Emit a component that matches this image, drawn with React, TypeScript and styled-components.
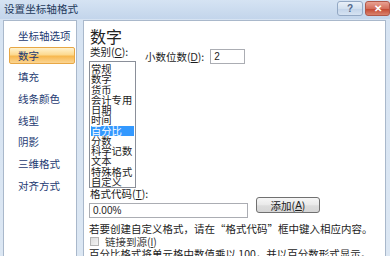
import React from "react";
import styled, { createGlobalStyle } from "styled-components";

const GlobalStyle = createGlobalStyle`
  html, body { margin: 0; padding: 0; }
  body {
    width: 390px;
    height: 256px;
    overflow: hidden;
    font-family: "Noto Sans CJK SC", "Liberation Sans", sans-serif;
    background: #d3e0ef;
  }
`;

const CJK = `"Noto Sans CJK SC", "Liberation Sans", sans-serif`;

const Window = styled.div`
  width: 390px;
  height: 256px;
  overflow: hidden;
  display: flex;
  flex-direction: column;
  background: linear-gradient(#d6e3f2, #dce7f3);
`;

const TitleBar = styled.div`
  height: 19px;
  flex: none;
  display: flex;
  align-items: flex-start;
  justify-content: space-between;
  background: linear-gradient(#d5e3f3, #c3d5eb);
`;

const Title = styled.div`
  font-family: ${CJK};
  font-size: 10.6px;
  line-height: 18px;
  padding-left: 4px;
  color: #1e395b;
`;

const TitleButtons = styled.div`
  display: flex;
  gap: 2px;
  padding-top: 1px;
`;

const CapButton = styled.div<{ $close?: boolean }>`
  width: ${(p) => (p.$close ? 25 : 26)}px;
  height: 15px;
  box-sizing: border-box;
  border: 1px solid ${(p) => (p.$close ? "#b0584a" : "#93a8c4")};
  border-radius: 3px;
  display: flex;
  align-items: center;
  justify-content: center;
  font-family: "Liberation Sans", sans-serif;
  font-weight: bold;
  font-size: 10px;
  color: ${(p) => (p.$close ? "#ffffff" : "#52688a")};
  background: ${(p) =>
    p.$close
      ? "linear-gradient(#e8a192, #d4705d 50%, #c44a33 55%, #d9826d)"
      : "linear-gradient(#e9f0f8, #d3e0ef 50%, #c3d4ea 55%, #d6e3f2)"};
`;

const Body = styled.div`
  flex: 1;
  display: flex;
  gap: 6px;
  padding: 1px 4px 0 3px;
  min-height: 0;
`;

const NavPanel = styled.div`
  width: 74px;
  height: 250px;
  flex: none;
  box-sizing: border-box;
  background: #ffffff;
  border: 1px solid #a9b8cb;
  padding: 6px 1px 0 5px;
  display: flex;
  flex-direction: column;
  gap: 4.7px;
`;

const NavItem = styled.div<{ $active?: boolean }>`
  height: 17px;
  box-sizing: border-box;
  display: flex;
  align-items: center;
  padding-left: 8px;
  font-family: ${CJK};
  font-size: 10.5px;
  color: #1d3a72;
  border: 1px solid ${(p) => (p.$active ? "#e8a745" : "transparent")};
  border-radius: 2px;
  background: ${(p) =>
    p.$active
      ? "linear-gradient(#fff3d0, #fcd98f 45%, #f7b84f 55%, #fbd593)"
      : "transparent"};
  &:first-child {
    margin-bottom: -2px;
  }
`;

const ContentPanel = styled.div`
  flex: 1;
  height: 250px;
  box-sizing: border-box;
  background: #ffffff;
  border: 1px solid #a9b8cb;
  padding: 6px 0 0 5px;
  font-family: ${CJK};
  font-size: 10.5px;
  color: #1c1c1c;
`;

const Heading = styled.div`
  font-size: 16px;
  line-height: 18px;
  padding-left: 1px;
  color: #222222;
`;

const TopRow = styled.div`
  display: flex;
  align-items: flex-start;
`;

const CategoryCol = styled.div`
  width: 47px;
  display: flex;
  flex-direction: column;
`;

const Label = styled.div`
  line-height: 13px;
  padding-left: 1px;
  white-space: nowrap;
`;

const Key = styled.span`
  text-decoration: underline;
  font-family: "Liberation Sans", sans-serif;
  font-size: 10px;
`;

const ListBox = styled.div`
  margin-top: 2px;
  width: 47px;
  height: 127px;
  box-sizing: border-box;
  border: 1px solid #8a8f99;
  padding: 2px 1px 0 1px;
  overflow: hidden;
`;

const ListItem = styled.div<{ $selected?: boolean }>`
  height: 10.27px;
  line-height: 10.27px;
  font-size: 10.3px;
  white-space: nowrap;
  color: ${(p) => (p.$selected ? "#ffffff" : "#1c1c1c")};
  background: ${(p) => (p.$selected ? "#3399ff" : "transparent")};
`;

const DecimalRow = styled.div`
  display: flex;
  align-items: center;
  margin: 4px 0 0 8px;
  gap: 6px;
`;

const TextInput = styled.div<{ $w: number }>`
  width: ${(p) => p.$w}px;
  height: 15px;
  box-sizing: border-box;
  border: 1px solid #abadb3;
  background: #ffffff;
  padding-left: 3px;
  display: flex;
  align-items: center;
  font-family: "Liberation Sans", sans-serif;
  font-size: 10px;
  color: #1c1c1c;
`;

const FormatRow = styled.div`
  display: flex;
  align-items: flex-end;
  margin-top: -1px;
`;

const FormatCol = styled.div`
  display: flex;
  flex-direction: column;
  gap: 2px;
`;

const PushButton = styled.div`
  width: 64px;
  height: 16px;
  box-sizing: border-box;
  margin: 0 0 5px 8px;
  border: 1px solid #707070;
  border-radius: 3px;
  background: linear-gradient(#f6f6f6, #e9e9e9 50%, #dcdcdc 55%, #d6d6d6);
  display: flex;
  align-items: center;
  justify-content: center;
  font-size: 10.5px;
  color: #1c1c1c;
`;

const Hint = styled.div`
  line-height: 13px;
  margin-top: 4px;
  white-space: nowrap;
`;

const CheckRow = styled.div`
  display: flex;
  align-items: center;
  height: 12px;
  gap: 6px;
  padding-left: 1px;
  color: #3a3a3a;
`;

const CheckBox = styled.div`
  width: 9px;
  height: 9px;
  box-sizing: border-box;
  border: 1px solid #b5b5b5;
  background: linear-gradient(135deg, #dcdcdc, #f4f4f4);
`;

const Note = styled.div`
  line-height: 13px;
  white-space: nowrap;
`;

const navItems = ["坐标轴选项", "数字", "填充", "线条颜色", "线型", "阴影", "三维格式", "对齐方式"];
const categories = ["常规", "数字", "货币", "会计专用", "日期", "时间", "百分比", "分数", "科学记数", "文本", "特殊格式", "自定义"];

export default function App() {
  return (
    <>
      <GlobalStyle />
      <Window>
        <TitleBar>
          <Title>设置坐标轴格式</Title>
          <TitleButtons>
            <CapButton>?</CapButton>
            <CapButton $close>✕</CapButton>
          </TitleButtons>
        </TitleBar>
        <Body>
          <NavPanel>
            {navItems.map((t) => (
              <NavItem key={t} $active={t === "数字"}>
                {t}
              </NavItem>
            ))}
          </NavPanel>
          <ContentPanel>
            <Heading>数字</Heading>
            <TopRow>
              <CategoryCol>
                <Label>
                  类别(<Key>C</Key>):
                </Label>
                <ListBox>
                  {categories.map((c) => (
                    <ListItem key={c} $selected={c === "百分比"}>
                      {c}
                    </ListItem>
                  ))}
                </ListBox>
              </CategoryCol>
              <DecimalRow>
                <Label>
                  小数位数(<Key>D</Key>):
                </Label>
                <TextInput $w={35}>2</TextInput>
              </DecimalRow>
            </TopRow>
            <FormatRow>
              <FormatCol>
                <Label>
                  格式代码(<Key>T</Key>):
                </Label>
                <TextInput $w={159}>0.00%</TextInput>
              </FormatCol>
              <PushButton>
                添加(<Key>A</Key>)
              </PushButton>
            </FormatRow>
            <Hint>若要创建自定义格式，请在“格式代码”框中键入相应内容。</Hint>
            <CheckRow>
              <CheckBox />
              <span>
                链接到源(<Key>I</Key>)
              </span>
            </CheckRow>
            <Note>百分比格式将单元格中数值乘以 100，并以百分数形式显示。</Note>
          </ContentPanel>
        </Body>
      </Window>
    </>
  );
}
